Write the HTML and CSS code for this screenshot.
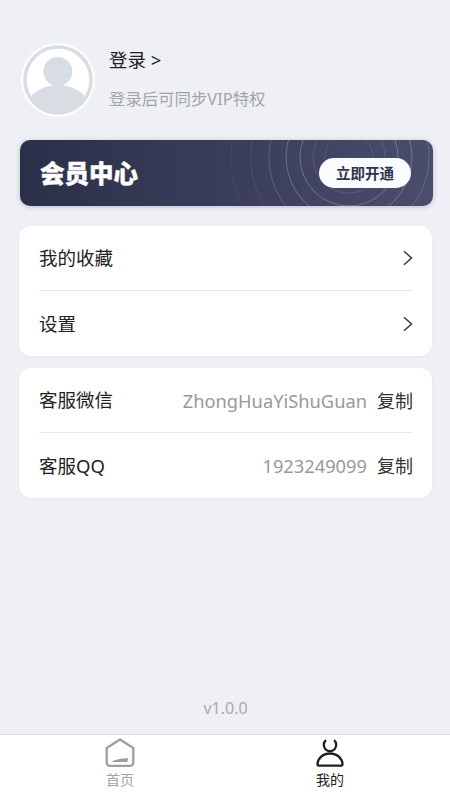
FILE: index.html
```html
<!DOCTYPE html>
<html lang="zh-CN">
<head>
<meta charset="utf-8">
<title>我的</title>
<link rel="stylesheet" href="styles.css">
</head>
<body>
<div class="page">
  <main class="content">
    <section class="profile">
      <div class="avatar">
        <svg viewBox="0 0 74 74" width="74" height="74">
          <defs><clipPath id="av"><circle cx="37" cy="37" r="33"/></clipPath></defs>
          <circle cx="37" cy="37" r="37" fill="#fff" fill-opacity=".85"/>
          <circle cx="37" cy="37" r="33" fill="#fff" stroke="#d8dce3" stroke-width="3.500"/>
          <g clip-path="url(#av)" fill="#d8dce3">
            <circle cx="36.800" cy="28.500" r="14.500"/>
            <ellipse cx="37" cy="70" rx="34" ry="28"/>
          </g>
        </svg>
      </div>
      <div class="profile-text">
        <div class="login">登录 &gt;</div>
        <div class="login-sub">登录后可同步VIP特权</div>
      </div>
    </section>

    <section class="vip">
      <svg class="vip-rings" viewBox="0 0 413 66" width="413" height="66" fill="none" stroke="#fff" stroke-width="1">
        <circle cx="329" cy="17" r="24" stroke-opacity=".1"/>
        <circle cx="329" cy="17" r="36" stroke-opacity=".12"/>
        <circle cx="329" cy="17" r="49" stroke-opacity=".25"/>
        <circle cx="329" cy="17" r="63" stroke-opacity=".25"/>
        <circle cx="329" cy="17" r="80" stroke-opacity=".16"/>
        <circle cx="329" cy="17" r="98" stroke-opacity=".08"/>
        <circle cx="329" cy="17" r="118" stroke-opacity=".05"/>
      </svg>
      <div class="vip-title">会员中心</div>
      <div class="vip-btn">立即开通</div>
    </section>

    <section class="card">
      <div class="row">
        <span class="row-label">我的收藏</span>
        <svg class="chev" viewBox="0 0 10 16" width="10" height="16" fill="none" stroke="#3a3a3a" stroke-width="1.500"><path d="M1 1.200 8.500 8 1 14.800"/></svg>
      </div>
      <div class="row">
        <span class="row-label">设置</span>
        <svg class="chev" viewBox="0 0 10 16" width="10" height="16" fill="none" stroke="#3a3a3a" stroke-width="1.500"><path d="M1 1.200 8.500 8 1 14.800"/></svg>
      </div>
    </section>

    <section class="card card-service">
      <div class="row">
        <span class="row-label">客服微信</span>
        <span class="row-value">ZhongHuaYiShuGuan</span>
        <span class="copy">复制</span>
      </div>
      <div class="row">
        <span class="row-label">客服QQ</span>
        <span class="row-value">1923249099</span>
        <span class="copy">复制</span>
      </div>
    </section>

    <div class="version">v1.0.0</div>
  </main>

  <nav class="tabbar">
    <div class="tab">
      <svg viewBox="0 0 30 30" width="30" height="30" fill="none" stroke="#9e9e9e" stroke-width="2.300" stroke-linejoin="round">
        <path d="M15 1.500 28.300 10v14.500a3.300 3.300 0 0 1-3.300 3.300H5a3.300 3.300 0 0 1-3.300-3.300V10z"/>
        <path d="M6.700 24c3-2.500 9-3.500 16.600-3.700-.3 1.600-.8 3.700-1.500 3.700z" fill="#9e9e9e" stroke="none"/>
      </svg>
      <span class="tab-label">首页</span>
    </div>
    <div class="tab tab-active">
      <svg viewBox="0 0 30 30" width="30" height="30" fill="none" stroke="#1f1f1f" stroke-width="2.300">
        <path d="M11 2.200A6.200 6.200 0 1 0 19 2.200"/>
        <path d="M15 15.500c-7.500 0-12.500 5.500-12.500 11 0 .8.400 1.200 1.200 1.200h22.600c.8 0 1.200-.4 1.200-1.200 0-5.500-5-11-12.500-11z"/>
      </svg>
      <span class="tab-label">我的</span>
    </div>
  </nav>
</div>
</body>
</html>
```
FILE: styles.css
```css
* { box-sizing: border-box; }
html, body { margin: 0; padding: 0; }
body {
  font-family: "Noto Sans", "Noto Sans CJK SC", sans-serif;
  background: #eef0f5;
  color: #222;
}
.page {
  width: 450px;
  height: 800px;
  display: flex;
  flex-direction: column;
  overflow: hidden;
}
.content {
  flex: 1;
  display: flex;
  flex-direction: column;
  padding: 43px 18px 0 19px;
}
.profile {
  display: flex;
  align-items: center;
  gap: 14px;
  padding-left: 2px;
  height: 74px;
}
.avatar { width: 74px; height: 74px; flex: none; }
.avatar svg { display: block; }
.profile-text {
  display: flex;
  flex-direction: column;
  gap: 13px;
  padding-bottom: 2px;
}
.login { font-size: 18.500px; line-height: 26px; color: #222; }
.login-sub { font-size: 16.400px; line-height: 26px; color: #a2a5ab; }
.vip {
  position: relative;
  margin: 23px 0 0 1px;
  height: 66px;
  border-radius: 10px;
  overflow: hidden;
  background: linear-gradient(90deg, #2a3049 0%, #3b3f5c 55%, #4a4d6c 100%);
  box-shadow: 0 1px 5px rgba(40, 45, 70, .25);
  display: flex;
  align-items: center;
  justify-content: space-between;
  padding: 0 22px 0 20px;
  width: 413px;
}
.vip-rings { position: absolute; left: 0; top: 0; }
.vip-title {
  position: relative;
  font-family: "Noto Sans CJK SC", sans-serif;
  font-size: 24.500px;
  font-weight: 900;
  line-height: 30px;
  color: #fff;
  -webkit-text-stroke: .4px #fff;
}
.vip-btn {
  position: relative;
  width: 92px;
  height: 30px;
  border-radius: 15px;
  background: #fafbfc;
  color: #2f3450;
  font-size: 14.500px;
  font-weight: 700;
  line-height: 30px;
  text-align: center;
}
.card {
  margin-top: 20px;
  width: 413px;
  height: 130px;
  padding: 0 19px 0 20px;
  background: #fff;
  border-radius: 12px;
  box-shadow: 0 1px 3px rgba(60, 70, 90, .06);
}
.card-service { margin-top: 12px; }
.row {
  height: 64px;
  display: flex;
  align-items: center;
  gap: 10px;
}
.row + .row { height: 66px; border-top: 1px solid #e6e7ea; }
.row-label { font-size: 18.500px; line-height: 26px; color: #222; flex: 1; }
.chev { flex: none; }
.row-value { font-size: 18.300px; line-height: 26px; color: #999; }
.copy { font-size: 18px; line-height: 26px; color: #333; }
.card-service .row:first-child .row-value,
.card-service .row:first-child .copy { padding-top: 2px; }
.version {
  margin-top: auto;
  margin-bottom: 14px;
  text-align: center;
  font-size: 16px;
  line-height: 24px;
  color: #aaa;
}
.tabbar {
  height: 66px;
  flex: none;
  background: #fff;
  border-top: 1px solid #dcdcdc;
  display: flex;
  padding: 3px 15px 0;
}
.tab {
  flex: 1;
  display: flex;
  flex-direction: column;
  align-items: center;
}
.tab svg { display: block; }
.tab-label { font-size: 14px; line-height: 20px; color: #a3a3a3; margin-top: 2px; }
.tab-active .tab-label { color: #222; }
```
